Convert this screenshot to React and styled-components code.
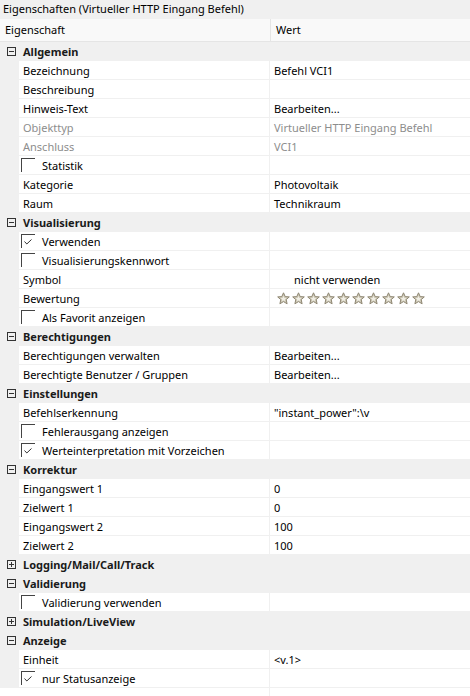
import React from "react";
import styled, { createGlobalStyle, css } from "styled-components";

const Global = createGlobalStyle`
  html, body { margin: 0; padding: 0; background: #ffffff; }
  body {
    font-family: "Noto Sans", "Open Sans", "Liberation Sans", sans-serif;
    font-size: 11px;
    color: #000000;
  }
  * { box-sizing: border-box; }
`;

const Panel = styled.div`
  width: 470px;
  height: 696px;
  display: flex;
  flex-direction: column;
  background: #ffffff;
  overflow: hidden;
`;

const TitleBar = styled.div`
  height: 19px;
  line-height: 18px;
  padding-left: 3px;
  background: #f0f0f0;
  white-space: nowrap;
`;

const Header = styled.div`
  display: grid;
  grid-template-columns: 271px 1fr;
  height: 23px;
  background: #f9f9f9;
  border-bottom: 1px solid #e5e5e5;
`;

const HeaderCell = styled.div`
  padding-left: 5px;
  line-height: 22px;
  border-right: ${(p) => (p.$first ? "1px solid #e5e5e5" : "none")};
`;

const CategoryRow = styled.div`
  display: flex;
  align-items: center;
  height: 19px;
  background: #f0f0f0;
  font-weight: 700;
  padding-left: 7px;
  gap: 7px;
  color: #1a1a1a;
`;

const ToggleBox = styled.div`
  width: 9px;
  height: 9px;
  border: 1px solid #333333;
  position: relative;
  flex: none;
  &::before {
    content: "";
    position: absolute;
    left: 1px;
    right: 1px;
    top: 3px;
    height: 1px;
    background: #333333;
  }
  ${(p) =>
    p.$plus &&
    css`
      &::after {
        content: "";
        position: absolute;
        top: 1px;
        bottom: 1px;
        left: 3px;
        width: 1px;
        background: #333333;
      }
    `}
`;

const PropRow = styled.div`
  display: grid;
  grid-template-columns: 19px 251px 1fr;
  height: 19px;
`;

const Gutter = styled.div`
  background: #f0f0f0;
`;

const NameCell = styled.div`
  display: flex;
  align-items: center;
  gap: 7px;
  padding-left: ${(p) => (p.$check ? 2 : 4)}px;
  background: #ffffff;
  border-right: 1px solid #f0f0f0;
  border-bottom: 1px solid #f0f0f0;
  color: ${(p) => (p.$disabled ? "#8d8d8d" : "#000000")};
  white-space: nowrap;
`;

const ValueCell = styled.div`
  display: flex;
  align-items: center;
  gap: 2px;
  padding-left: ${(p) => p.$indent ?? 4}px;
  background: #ffffff;
  border-bottom: 1px solid #f0f0f0;
  color: ${(p) => (p.$disabled ? "#8d8d8d" : "#000000")};
  white-space: nowrap;
`;

const CheckBox = styled.span`
  width: 14px;
  height: 14px;
  flex: none;
  border-top: 1px solid #444444;
  border-left: 1px solid #444444;
  display: flex;
  align-items: flex-end;
  padding: 0 0 3px 2px;
`;

const Filler = styled.div`
  flex: 1;
  display: grid;
  grid-template-columns: 270px 1fr;
`;

const FillerLeft = styled.div`
  border-right: 1px solid #f0f0f0;
`;

const Check = () => (
  <svg width="8" height="6" viewBox="0 0 8 6">
    <polyline points="0.5,2.5 2.8,5 7.5,0.5" fill="none" stroke="#333" strokeWidth="1" />
  </svg>
);

const Star = () => (
  <svg width="13" height="13" viewBox="0 0 13 13">
    <polygon
      points="6.5,0.8 8.2,4.6 12.3,4.9 9.2,7.6 10.1,11.8 6.5,9.6 2.9,11.8 3.8,7.6 0.7,4.9 4.8,4.6"
      fill="#cfcab8"
      stroke="#8e8672"
      strokeWidth="1"
      strokeLinejoin="round"
    />
    <polygon
      points="6.5,3.8 7.3,5.9 9.3,6.1 7.8,7.4 8.2,9.2 6.5,8.2 4.8,9.2 5.2,7.4 3.7,6.1 5.7,5.9"
      fill="#f1efe6"
    />
  </svg>
);

const rows = [
  { cat: "Allgemein" },
  { name: "Bezeichnung", value: "Befehl VCI1" },
  { name: "Beschreibung", value: "" },
  { name: "Hinweis-Text", value: "Bearbeiten..." },
  { name: "Objekttyp", value: "Virtueller HTTP Eingang Befehl", disabled: true },
  { name: "Anschluss", value: "VCI1", disabled: true },
  { name: "Statistik", check: false },
  { name: "Kategorie", value: "Photovoltaik" },
  { name: "Raum", value: "Technikraum" },
  { cat: "Visualisierung" },
  { name: "Verwenden", check: true },
  { name: "Visualisierungskennwort", check: false },
  { name: "Symbol", value: "nicht verwenden", indent: 24 },
  { name: "Bewertung", stars: 10 },
  { name: "Als Favorit anzeigen", check: false },
  { cat: "Berechtigungen" },
  { name: "Berechtigungen verwalten", value: "Bearbeiten..." },
  { name: "Berechtigte Benutzer / Gruppen", value: "Bearbeiten..." },
  { cat: "Einstellungen" },
  { name: "Befehlserkennung", value: "\"instant_power\":\\v" },
  { name: "Fehlerausgang anzeigen", check: false },
  { name: "Werteinterpretation mit Vorzeichen", check: true },
  { cat: "Korrektur" },
  { name: "Eingangswert 1", value: "0" },
  { name: "Zielwert 1", value: "0" },
  { name: "Eingangswert 2", value: "100" },
  { name: "Zielwert 2", value: "100" },
  { cat: "Logging/Mail/Call/Track", collapsed: true },
  { cat: "Validierung" },
  { name: "Validierung verwenden", check: false },
  { cat: "Simulation/LiveView", collapsed: true },
  { cat: "Anzeige" },
  { name: "Einheit", value: "<v.1>" },
  { name: "nur Statusanzeige", check: true },
];

export default function App() {
  return (
    <>
      <Global />
      <Panel>
        <TitleBar>Eigenschaften (Virtueller HTTP Eingang Befehl)</TitleBar>
        <Header>
          <HeaderCell $first>Eigenschaft</HeaderCell>
          <HeaderCell>Wert</HeaderCell>
        </Header>
        {rows.map((r, i) =>
          r.cat ? (
            <CategoryRow key={i}>
              <ToggleBox $plus={r.collapsed} />
              <span>{r.cat}</span>
            </CategoryRow>
          ) : (
            <PropRow key={i}>
              <Gutter />
              <NameCell $disabled={r.disabled} $check={r.check !== undefined}>
                {r.check !== undefined && <CheckBox>{r.check && <Check />}</CheckBox>}
                <span>{r.name}</span>
              </NameCell>
              <ValueCell $disabled={r.disabled} $indent={r.stars ? 7 : r.indent}>
                {r.stars
                  ? Array.from({ length: r.stars }).map((_, k) => <Star key={k} />)
                  : r.value}
              </ValueCell>
            </PropRow>
          )
        )}
        <Filler>
          <FillerLeft />
          <div />
        </Filler>
      </Panel>
    </>
  );
}
